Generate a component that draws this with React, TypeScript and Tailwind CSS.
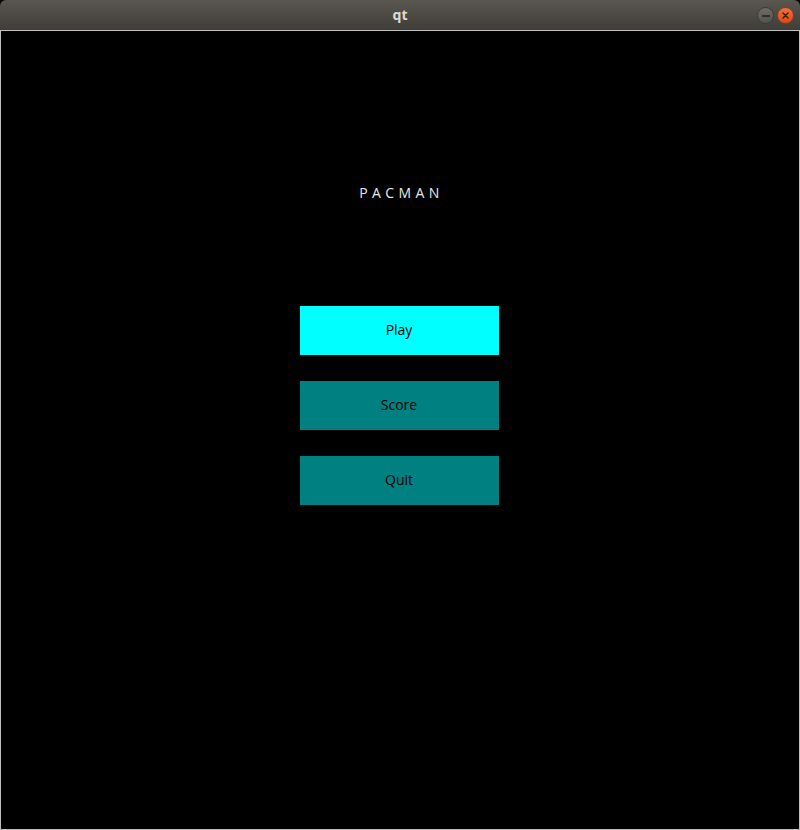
import React from "react";

export default function App() {
  return (
    <div className="w-[800px] h-[830px] flex flex-col bg-black" style={{ fontFamily: "'Open Sans', 'Noto Sans', sans-serif" }}>
      <div className="h-[30px] shrink-0 relative flex items-center justify-center rounded-t-[6px] bg-gradient-to-b from-[#5a5650] to-[#403e39]">
        <span className="text-[14px] font-bold text-[#dfdbd2] leading-none" style={{ fontFamily: "'Noto Sans', sans-serif" }}>qt</span>
        <div className="absolute right-[6px] top-[7px] flex gap-[3px]">
          <div className="w-[17px] h-[17px] rounded-full bg-gradient-to-b from-[#6b6a65] to-[#55544f] border border-[#3a3935] flex items-center justify-center">
            <div className="w-[8px] h-[2px] bg-[#2f2e2b]" />
          </div>
          <div className="w-[17px] h-[17px] rounded-full bg-gradient-to-b from-[#f2703f] to-[#dd4814] border border-[#8a3a1a] flex items-center justify-center">
            <svg width="9" height="9" viewBox="0 0 9 9">
              <path d="M2 2 L7 7 M7 2 L2 7" stroke="#3a1a0c" strokeWidth="1.4" strokeLinecap="round" />
            </svg>
          </div>
        </div>
      </div>
      <div className="flex-1 border border-[#bdbdbd] bg-black flex flex-col items-center">
        <div className="pt-[152px] h-[172px] shrink-0 text-[14px] leading-[20px] tracking-[4.4px] text-[#e8e8e8] pl-[3px]">PACMAN</div>
        <div className="mt-[103px] mr-[2px] flex flex-col gap-[26px]">
          <div className="w-[199px] h-[49px] bg-[#00ffff] flex items-center justify-center text-[14px] leading-[20px] pb-[1px] text-black">Play</div>
          <div className="w-[199px] h-[49px] bg-[#008080] flex items-center justify-center text-[14px] leading-[20px] pb-[1px] text-black">Score</div>
          <div className="w-[199px] h-[49px] bg-[#008080] flex items-center justify-center text-[14px] leading-[20px] pb-[1px] text-black">Quit</div>
        </div>
      </div>
    </div>
  );
}
